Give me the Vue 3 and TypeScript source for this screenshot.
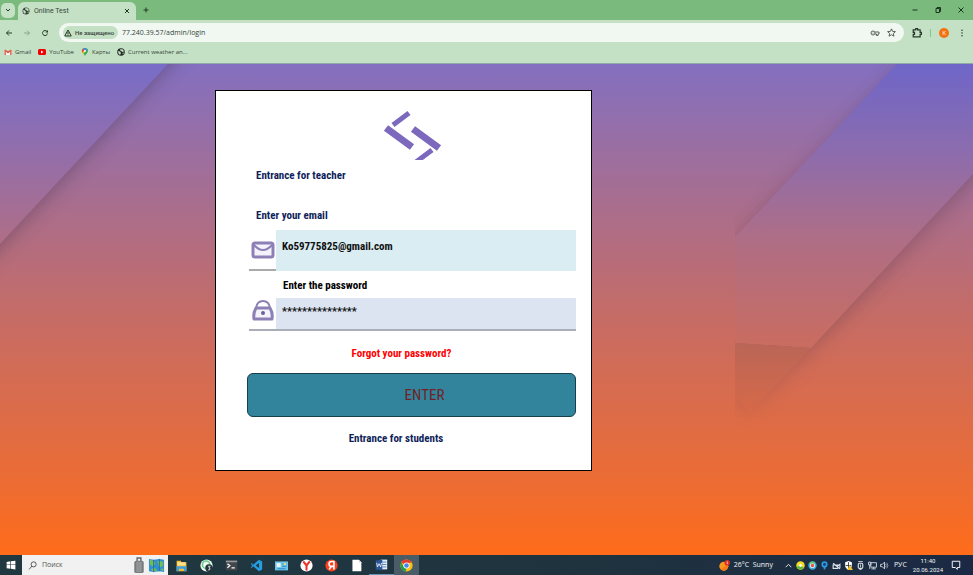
<script setup lang="ts">
import { ref } from 'vue'

const email = ref('Ko59775825@gmail.com')
const password = ref('***************')
const address = ref('77.240.39.57/admin/login')
const query = ref('')
</script>

<template>
  <div class="desktop">
    <header class="browser">
      <div class="tabs">
        <button class="tab-menu" aria-label="Search tabs">
          <svg viewBox="0 0 16 16"><path d="M4 6l4 4 4-4" fill="none" stroke="#233827" stroke-width="2" /></svg>
        </button>
        <div class="tab">
          <svg class="icon" viewBox="0 0 16 16"><circle cx="8" cy="8" r="7" fill="#34423a" /><path d="M2 6l4 1 2 3-2 4-3-3zM7 2l5 1 2 4-4 1-1-2-3-1zM11 10l3-1-2 4z" fill="#c5e1c5" /></svg>
          <span>Online Test</span>
          <button class="plain" aria-label="Close tab">
            <svg viewBox="0 0 16 16"><path d="M4 4l8 8M12 4l-8 8" fill="none" stroke="#233827" stroke-width="2" /></svg>
          </button>
        </div>
        <button class="plain new-tab" aria-label="New tab">
          <svg viewBox="0 0 16 16"><path d="M8 3v10M3 8h10" fill="none" stroke="#233827" stroke-width="2" /></svg>
        </button>
        <div class="window-buttons">
          <button class="plain" aria-label="Minimize"><svg viewBox="0 0 16 16"><path d="M3 8h10" fill="none" stroke="#1c3420" stroke-width="2" /></svg></button>
          <button class="plain" aria-label="Restore"><svg viewBox="0 0 16 16"><path d="M4 5h7v8H4zM6 5V3h7v8h-2" fill="none" stroke="#1c3420" stroke-width="2" /></svg></button>
          <button class="plain" aria-label="Close"><svg viewBox="0 0 16 16"><path d="M3 3l10 10M13 3L3 13" fill="none" stroke="#1c3420" stroke-width="2" /></svg></button>
        </div>
      </div>

      <div class="toolbar">
        <nav class="history">
          <button class="plain" aria-label="Back"><svg viewBox="0 0 16 16"><path d="M14 8H3M8 3L3 8l5 5" fill="none" stroke="#26382a" stroke-width="2" /></svg></button>
          <button class="plain" aria-label="Forward"><svg viewBox="0 0 16 16"><path d="M2 8h11M8 3l5 5-5 5" fill="none" stroke="#8ba58d" stroke-width="2" /></svg></button>
          <button class="plain" aria-label="Reload"><svg viewBox="0 0 16 16"><path d="M13 9a5 5 0 1 1-1-4" fill="none" stroke="#26382a" stroke-width="2" /><path d="M14 2v5H9z" fill="#26382a" /></svg></button>
        </nav>
        <div class="omnibox">
          <button class="security">
            <svg viewBox="0 0 16 16"><path d="M8 2l6.500 12h-13zM8 6v4M8 11v2" fill="none" stroke="#26382a" stroke-width="2" /></svg>
            <span>Не защищено</span>
          </button>
          <input v-model="address" class="address" type="text" aria-label="Address" />
          <svg class="icon wide" viewBox="0 0 20 16"><circle cx="6" cy="8" r="4" fill="none" stroke="#55605a" stroke-width="2" /><circle cx="6" cy="8" r="1" fill="#55605a" /><path d="M10 6h8v4h-2v3h-3v-3h-3" fill="none" stroke="#55605a" stroke-width="2" /></svg>
          <svg class="icon star" viewBox="0 0 16 16"><path d="M8 1.500l2 4.500 5 .5-3.800 3.200 1.200 4.800L8 12l-4.400 2.500 1.200-4.800L1 6.500 6 6z" fill="none" stroke="#3c4840" stroke-width="1.500" /></svg>
        </div>
        <div class="actions">
          <button class="plain" aria-label="Extensions"><svg class="puzzle" viewBox="0 0 16 16"><path d="M2 3h4V1h3v2h4v4h2v3h-2v4H2v-4h2V7H2z" fill="none" stroke="#26382a" stroke-width="2" /></svg></button>
          <span class="divider"></span>
          <button class="avatar">K</button>
          <button class="plain" aria-label="Menu"><svg viewBox="0 0 16 16"><g fill="#26382a"><circle cx="8" cy="2.500" r="1.500" /><circle cx="8" cy="8" r="1.500" /><circle cx="8" cy="13.500" r="1.500" /></g></svg></button>
        </div>
      </div>

      <nav class="bookmarks">
        <a href="#gmail"><svg class="icon" viewBox="0 0 16 16"><path d="M2 4l6 5 6-5" fill="none" stroke="#e5463a" stroke-width="3" /><path d="M1 4h3v10H1zM12 4h3v10h-3z" fill="#e86a60" /><path d="M4 8l4 3 4-3v6H4z" fill="#f4f4f4" /></svg>Gmail</a>
        <a href="#youtube"><svg class="icon" viewBox="0 0 16 16"><rect y="2" width="16" height="12" rx="3" fill="#f00000" /><path d="M6 5l5 3-5 3z" fill="#fff" /></svg>YouTube</a>
        <a href="#maps"><svg class="icon" viewBox="0 0 16 16"><path d="M8 16C7 12 2 10 2 6a6 6 0 0 1 12 0c0 4-5 6-6 10z" fill="#35a853" /><path d="M3 9L8 3 4 1a6 6 0 0 0-1 8z" fill="#e84a3c" /><path d="M4 2a6 6 0 0 1 9 1L9 7z" fill="#4385f0" /><path d="M3 9l4-5 2 3-4 5z" fill="#f8bc10" /><circle cx="8" cy="6" r="2" fill="#fff" /></svg>Карты</a>
        <a href="#weather"><svg class="icon" viewBox="0 0 16 16"><circle cx="8" cy="8" r="7.500" fill="#1f2a24" /><path d="M2 6l4 1 2 3-2 4-3-3zM7 2l5 1 2 4-4 1-1-2-3-1zM11 10l3-1-2 4z" fill="#c5e1c5" /></svg>Current weather an...</a>
      </nav>
    </header>

    <main class="page">
      <svg class="wallpaper" viewBox="0 0 973 491" preserveAspectRatio="none" aria-hidden="true">
        <defs>
          <linearGradient id="sky" gradientUnits="userSpaceOnUse" x1="0" y1="0" x2="0" y2="491">
            <stop offset="0" stop-color="#8470c0" />
            <stop offset="0.500" stop-color="#c46c68" />
            <stop offset="0.850" stop-color="#ec6c34" />
            <stop offset="1" stop-color="#ff6c1a" />
          </linearGradient>
          <linearGradient id="fold" gradientUnits="userSpaceOnUse" x1="0" y1="0" x2="0" y2="290">
            <stop offset="0" stop-color="#6e66c8" />
            <stop offset="0.300" stop-color="#8c6cae" />
            <stop offset="0.600" stop-color="#ae6e86" />
            <stop offset="1" stop-color="#cb6c5e" />
          </linearGradient>
          <linearGradient id="corner" gradientUnits="userSpaceOnUse" x1="0" y1="0" x2="0" y2="180">
            <stop offset="0" stop-color="#786dc8" />
            <stop offset="0.500" stop-color="#936eaa" />
            <stop offset="1" stop-color="#b06e86" />
          </linearGradient>
          <linearGradient id="patch" x1="0" y1="0" x2="0" y2="1">
            <stop offset="0" stop-color="#704c40" stop-opacity="0.200" />
            <stop offset="1" stop-color="#a05038" stop-opacity="0.100" />
          </linearGradient>
          <linearGradient id="fade" gradientUnits="userSpaceOnUse" x1="0" y1="260" x2="0" y2="365">
            <stop offset="0" stop-color="#fff" />
            <stop offset="1" stop-color="#333" />
          </linearGradient>
          <mask id="right" maskUnits="userSpaceOnUse" x="735" y="0" width="238" height="491"><rect x="735" width="238" height="491" fill="url(#fade)" /></mask>
          <filter id="soft" x="-30%" y="-30%" width="160%" height="160%"><feGaussianBlur stdDeviation="10" /></filter>
        </defs>
        <rect width="973" height="491" fill="url(#sky)" />
        <path d="M-40 -40H207L-40 225z" fill="#403048" opacity="0.450" filter="url(#soft)" />
        <path d="M0 0H168L0 180z" fill="url(#corner)" />
        <g mask="url(#right)">
          <path d="M905 0L735 181V345L750 348L1010 75V0z" fill="#503448" opacity="0.400" filter="url(#soft)" />
          <path d="M897 0L735 173V279L811 284L973 110V0z" fill="url(#fold)" />
        </g>
        <path d="M735 279L811 284L750 348L735 334z" fill="url(#sky)" />
        <path d="M735 279L811 284L750 348L735 334z" fill="url(#patch)" />
      </svg>

      <form class="card" @submit.prevent>
        <svg class="logo" viewBox="0 0 60 50" role="img" aria-label="Logo">
          <g fill="none" stroke="#7c68bc">
            <path d="M11 15L27 3" stroke-width="5" />
            <path d="M4 18L30 37M31 19L57 38" stroke-width="7" />
            <path d="M50 40L34 52" stroke-width="5" />
          </g>
        </svg>
        <h1>Entrance for teacher</h1>
        <label class="email-label" for="email">Enter your email</label>
        <div class="field email">
          <span class="symbol"><svg viewBox="0 0 24 20"><rect x="2" y="3" width="20" height="14" rx="2" fill="#f4f2fa" stroke="#8c80b6" stroke-width="3" /><path d="M3 5q9 10 18 0" fill="none" stroke="#8c80b6" stroke-width="2" /></svg></span>
          <input id="email" v-model="email" type="email" />
        </div>
        <label class="password-label" for="password">Enter the password</label>
        <div class="field password">
          <span class="symbol"><svg viewBox="0 0 24 22"><path d="M5 9q1-7 7-7t7 7" fill="none" stroke="#8c80b6" stroke-width="2" /><path d="M5 9h14q3 5 2 11H3Q2 14 5 9z" fill="#f4f2fa" stroke="#8c80b6" stroke-width="3" stroke-linejoin="round" /><circle cx="12" cy="14" r="2" fill="#6e609e" /></svg></span>
          <input id="password" v-model="password" type="text" autocomplete="off" />
        </div>
        <a class="forgot" href="#reset">Forgot your password?</a>
        <button class="enter" type="submit">ENTER</button>
        <a class="students" href="#students">Entrance for students</a>
      </form>
    </main>

    <footer class="taskbar">
      <button class="start" aria-label="Start"><svg viewBox="0 0 16 16"><path d="M1 3l6-1v5H1zM8 2l7-1v6H8zM1 8h6v6l-6-1zM8 8h7v7l-7-1z" fill="#fff" /></svg></button>
      <div class="search">
        <svg class="icon" viewBox="0 0 16 16"><circle cx="10" cy="6" r="4.500" fill="none" stroke="#444" stroke-width="1.500" /><path d="M7 9l-5 6" stroke="#444" stroke-width="1.500" /></svg>
        <input v-model="query" type="search" placeholder="Поиск" aria-label="Поиск" />
        <svg class="suitcase" viewBox="0 0 12 18"><path d="M4 5V1h4v4" fill="none" stroke="#666" stroke-width="1.500" /><rect x="1" y="4" width="10" height="13" rx="2" fill="#777b7c" /><path d="M4 5v11M6 5v11M8 5v11" stroke="#a9adae" /></svg>
        <svg class="map" viewBox="0 0 18 18"><path d="M1 2l5 1 6-1 5 1v13l-5-1-6 1-5-1z" fill="#2f90d2" /><path d="M2 3l4 1 2 3-3 3-3-2zM10 4l6 1v4l-3 2-2-2zM3 13l4-2 3 4-5 0zM13 13l3-1v3z" fill="#74bd55" /><path d="M6 3v13M12 2v13" stroke="#226fa5" /></svg>
      </div>
      <nav class="apps">
        <button aria-label="Explorer"><svg viewBox="0 0 16 16"><path d="M2 2h5l1 2h6v11H2z" fill="#f5bd36" /><path d="M3 4h10v4H3z" fill="#ffe18b" /><path d="M2 9h12v6h-3v-3H5v3H2z" fill="#3d9fe0" /></svg></button>
        <button aria-label="WhatsApp"><svg viewBox="0 0 16 16"><circle cx="8" cy="8" r="7.500" fill="#f0f8f0" /><circle cx="7.500" cy="7" r="4.500" fill="none" stroke="#6acb8c" stroke-width="2" /><circle cx="11" cy="11" r="4.500" fill="#24343c" /><path d="M10 9h2.500l-1.500 2q2 0 1 2-1 1-2 0" fill="none" stroke="#fff" /></svg></button>
        <button aria-label="Terminal"><svg viewBox="0 0 16 16"><rect x="1" y="2" width="14" height="12" fill="#42454a" /><path d="M1 3h14" stroke="#999" stroke-width="2" /><path d="M3 6l3 2-3 3M8 11h4" fill="none" stroke="#fff" stroke-width="1.500" /></svg></button>
        <button aria-label="Code"><svg viewBox="0 0 16 16"><path d="M11 1l4 2v10l-4 2-7-6-2 2-1-1 2-2-2-2 1-1 2 2zM11 5L7 8l4 3z" fill="#269cdf" fill-rule="evenodd" /></svg></button>
        <button aria-label="Control panel"><svg viewBox="0 0 16 16"><rect y="3" width="16" height="11" fill="#6fc5ee" /><rect x="2" y="5" width="5" height="5" fill="#e9f8ff" /><path d="M9 6h5M9 9h5M3 12h10" stroke="#167eb6" /><circle cx="12" cy="6" r="1.500" fill="#ecdf73" /></svg></button>
        <button aria-label="Yandex Browser"><svg viewBox="0 0 16 16"><circle cx="8" cy="8" r="7.500" fill="#fff" /><path d="M4 3l4 5 4-5M8 8v6" fill="none" stroke="#e93329" stroke-width="2.500" /></svg></button>
        <button aria-label="Yandex"><svg viewBox="0 0 16 16"><circle cx="8" cy="8" r="7.500" fill="#fc3f1d" /><path d="M11 13V3H8a3 3 0 0 0 0 6h3M8 9l-3 4" fill="none" stroke="#fff" stroke-width="2" /></svg></button>
        <button aria-label="Document"><svg viewBox="0 0 16 16"><path d="M3 1h8l3 3v11H3z" fill="#fff" /><path d="M11 1v3h3" fill="#ccc" /></svg></button>
        <button class="running" aria-label="Word"><svg viewBox="0 0 16 16"><path d="M7 2h8v12H7z" fill="#e5effb" /><path d="M9 5h5M9 8h5M9 11h5" stroke="#416fae" /><path d="M1 3l8-1v13l-8-1z" fill="#2a579a" /><path d="M2 6l1 5 2-4 2 4 1-5" fill="none" stroke="#fff" /></svg></button>
        <button class="active" aria-label="Chrome"><svg viewBox="0 0 16 16"><circle cx="8" cy="8" r="7.500" fill="#fbc116" /><path d="M8 8L1.500 4.250A7.500 7.500 0 0 1 14.500 4.250L8 5z" fill="#e33b2e" /><path d="M1.500 4.250L5 10l3 1-1 4.500A7.500 7.500 0 0 1 1.500 4.250z" fill="#269d4b" /><circle cx="8" cy="8" r="3.800" fill="#fff" /><circle cx="8" cy="8" r="2.800" fill="#4285f4" /></svg></button>
      </nav>
      <div class="weather">
        <svg viewBox="0 0 16 16"><circle cx="7" cy="9" r="6.500" fill="#f79b20" /><path d="M2 13q6-1 9-9l3 5-4 6q-5 2-8-2z" fill="#fc7a19" /><circle cx="12" cy="4" r="4" fill="#df2d22" /><path d="M12 2v4" stroke="#fff" /></svg>
        <span>26°C&nbsp; Sunny</span>
      </div>
      <div class="tray">
        <svg viewBox="0 0 16 16"><path d="M3 11l5-5 5 5" fill="none" stroke="#fff" stroke-width="1.500" /></svg>
        <svg viewBox="0 0 16 16"><circle cx="8" cy="8" r="7.500" fill="#f2dc25" /><path d="M1 10a7.500 7.500 0 0 0 13 2L8 8z" fill="#58b83b" /><circle cx="8" cy="8" r="2.500" fill="#fff" /></svg>
        <svg viewBox="0 0 16 16"><circle cx="8" cy="8" r="6" fill="#e6f5ff" stroke="#37abdc" stroke-width="3" /><path d="M3 5a6 6 0 0 1 9-1" fill="none" stroke="#68c662" stroke-width="3" /><circle cx="8" cy="8" r="3" fill="#e25535" /></svg>
        <svg viewBox="0 0 16 16"><circle cx="8" cy="6" r="4" fill="#123b70" stroke="#2b9be2" stroke-width="3" /><path d="M8 9v6" stroke="#2b9be2" stroke-width="3" /></svg>
        <svg viewBox="0 0 16 16"><path d="M2 4l12 10M2 7h8v6H2zM10 9l4-3v7" fill="none" stroke="#dce4ea" stroke-width="2" /></svg>
        <svg viewBox="0 0 16 16"><path d="M2 2l6-2 6 2v6q0 5-6 8-6-3-6-8z" fill="#fff" /><path d="M8 2v12M3 8h10" stroke="#24344a" stroke-width="1.500" /><path d="M10 7l6 9H6z" fill="#f4c025" /></svg>
        <svg viewBox="0 0 16 16"><rect x="4" y="4" width="8" height="9" rx="2" fill="none" stroke="#dce4ea" stroke-width="2" /><path d="M4 1h8M6 15h4M8 6v5" stroke="#dce4ea" stroke-width="1.500" /></svg>
        <svg viewBox="0 0 16 16"><path d="M5 3h10v8H5zM10 11v3M6 14h8M1 2h4v5H1zM3 7v7" fill="none" stroke="#dce4ea" stroke-width="1.500" /></svg>
        <svg viewBox="0 0 16 16"><path d="M1 6h3l4-4v12l-4-4H1z" fill="none" stroke="#dce4ea" stroke-width="1.500" /><path d="M10 5q2 3 0 6M12 3q4 5 0 10" fill="none" stroke="#9aa8b4" stroke-width="1.500" /></svg>
      </div>
      <span class="language">РУС</span>
      <time class="clock">11:40<br />20.06.2024</time>
      <button class="notifications" aria-label="Notifications"><svg viewBox="0 0 16 16"><path d="M2 2h12v10h-4v3l-3-3H2z" fill="none" stroke="#fff" stroke-width="1.500" /></svg></button>
    </footer>
  </div>
</template>

<style>
body {
  margin: 0;
}
</style>

<style scoped>
* {
  box-sizing: border-box;
}

.desktop {
  display: flex;
  flex-direction: column;
  min-height: 100vh;
  font-family: "Open Sans", "Noto Sans", sans-serif;
  font-size: 7px;
  line-height: 10px;
  color: #34443a;
}

button,
input {
  margin: 0;
  padding: 0;
  border: 0;
  font: inherit;
  color: inherit;
  background: none;
}

a {
  color: inherit;
  text-decoration: none;
}

svg {
  display: block;
}

.icon {
  flex: none;
  width: 8px;
  height: 8px;
}

.browser {
  flex: none;
  background: #c5e1c5;
  border-bottom: 1px solid #8fa9a4;
}

.tabs {
  display: flex;
  align-items: center;
  height: 20px;
  font-family: Roboto, sans-serif;
  background: #7aba7c;
}

.tab-menu {
  display: grid;
  place-items: center;
  width: 14px;
  height: 15px;
  margin: 0 3px 0 1px;
  border-radius: 5px;
  background: #c5e1c5;
}

.tab-menu svg,
.plain svg {
  width: 8px;
  height: 8px;
}

.plain .puzzle {
  width: 10px;
  height: 10px;
}

.plain {
  display: grid;
  flex: none;
  place-items: center;
  width: 10px;
  height: 10px;
}

.tab {
  display: flex;
  align-items: center;
  align-self: flex-end;
  gap: 4px;
  width: 118px;
  height: 18px;
  padding: 0 4px;
  border-radius: 6px 6px 0 0;
  background: #c5e1c5;
}

.tab span {
  flex: 1;
}

.new-tab {
  margin-left: 5px;
}

.window-buttons {
  display: flex;
  gap: 13px;
  margin-left: auto;
  padding-right: 7px;
}

.toolbar {
  display: flex;
  align-items: center;
  height: 25px;
}

.history {
  display: flex;
  gap: 8px;
  width: 59px;
  padding-left: 4px;
}

.omnibox {
  display: flex;
  flex: 1;
  align-items: center;
  height: 19px;
  padding: 0 8px 0 4px;
  border-radius: 10px;
  background: #f1f8f1;
}

.security {
  display: flex;
  flex: none;
  align-items: center;
  gap: 3px;
  width: 55px;
  height: 13px;
  padding-left: 1px;
  border-radius: 7px;
  font-family: Roboto, sans-serif;
  font-size: 6px;
  font-weight: 500;
  white-space: nowrap;
  background: #c5e1c5;
}

.security svg {
  flex: none;
  width: 8px;
  height: 8px;
}

.address {
  flex: 1;
  min-width: 0;
  padding-left: 4px;
}

.wide {
  width: 10px;
}

.star {
  width: 9px;
  height: 9px;
  margin-left: 7px;
}

.actions {
  display: flex;
  align-items: center;
  gap: 8px;
  padding: 0 6px 0 8px;
}

.divider {
  width: 1px;
  height: 8px;
  background: #83c488;
}

.avatar {
  width: 10px;
  height: 10px;
  border-radius: 50%;
  font-size: 6px;
  text-align: center;
  color: #fff;
  background: #f37210;
}

.bookmarks {
  display: flex;
  gap: 7px;
  height: 18px;
  padding: 0 4px 4px;
  font-size: 6px;
}

.bookmarks a {
  display: flex;
  align-items: center;
  gap: 3px;
}

.page {
  position: relative;
  display: grid;
  flex: 1;
  grid-template-columns: 215fr 377fr 381fr;
  align-items: start;
  padding: 26px 0;
}

.wallpaper {
  position: absolute;
  inset: 0;
  width: 100%;
  height: 100%;
}

.card {
  position: relative;
  display: flex;
  flex-direction: column;
  grid-column: 2;
  padding: 19px 15px 21px 31px;
  border: 1px solid #000;
  font-family: "Roboto Condensed", "Open Sans Condensed", Carlito, Lato, sans-serif;
  font-size: 11px;
  font-weight: 700;
  line-height: 20px;
  color: #0e1e5a;
  background: #fff;
}

.logo {
  align-self: center;
  width: 60px;
  height: 50px;
}

h1 {
  margin: 6px 0 20px;
  padding-left: 9px;
  font-size: inherit;
  line-height: inherit;
}

.email-label {
  padding-left: 9px;
}

.email-label,
.password-label {
  height: 24px;
}

.password-label {
  height: 27px;
  padding: 5px 0 0 36px;
  color: #000;
}

.field {
  display: flex;
  margin-left: 2px;
  color: #111;
}

.field input {
  flex: 1;
  min-width: 0;
  padding-left: 6px;
}

.symbol {
  display: grid;
  place-items: center;
  width: 27px;
}

.symbol svg {
  width: 24px;
  height: 22px;
}

.email {
  height: 41px;
}

.email .symbol {
  border-bottom: 2px solid #aaa;
}

.email input {
  padding-bottom: 8px;
  background: #daedf3;
}

.password {
  height: 33px;
  border-bottom: 2px solid #abaeb8;
}

.password .symbol {
  padding-bottom: 7px;
}

.password input {
  padding-bottom: 4px;
  background: #dbe4f0;
}

.forgot {
  align-self: center;
  margin: 13px 20px 9px 0;
  color: #f00;
}

.enter {
  height: 44px;
  padding-left: 26px;
  border: 1px solid #163f4c;
  border-radius: 6px;
  font-size: 15px;
  font-weight: 400;
  color: #702327;
  background: #31849b;
}

.students {
  align-self: center;
  margin: 12px 31px 0 0;
}

.taskbar {
  display: flex;
  flex: none;
  align-items: center;
  height: 20px;
  color: #f2f5f7;
  background: linear-gradient(90deg, #203840, #1f333f 60%, #1b2944);
}

.start {
  display: grid;
  place-items: center;
  width: 22px;
  height: 20px;
}

.start svg {
  width: 10px;
  height: 10px;
}

.search {
  display: flex;
  align-items: center;
  width: 146px;
  height: 20px;
  padding: 0 3px 0 6px;
  color: #555;
  background: #f1f1f1;
}

.search .icon {
  width: 9px;
  height: 9px;
}

.search input {
  flex: 1;
  min-width: 0;
  padding-left: 5px;
}

.search input::placeholder {
  color: #555;
}

.suitcase {
  width: 12px;
  height: 17px;
}

.map {
  width: 17px;
  height: 17px;
  margin-left: 3px;
}

.apps {
  display: flex;
  padding-left: 1px;
}

.apps button {
  display: grid;
  place-items: center;
  width: 25px;
  height: 20px;
}

.apps svg {
  width: 13px;
  height: 13px;
}

.apps .running {
  border-bottom: 1px solid #6693b0;
}

.apps .active {
  background: #4a5d66;
}

.weather {
  display: flex;
  align-items: center;
  gap: 4px;
  margin-left: auto;
  white-space: nowrap;
}

.weather svg {
  width: 11px;
  height: 11px;
}

.tray {
  display: flex;
  gap: 3px;
  margin: 0 5px 0 11px;
}

.tray svg {
  width: 9px;
  height: 9px;
}

.clock {
  margin: 0 8px 0 6px;
  font-family: Roboto, sans-serif;
  font-size: 6px;
  line-height: 9px;
  text-align: center;
}

.notifications {
  padding-right: 12px;
}

.notifications svg {
  width: 10px;
  height: 10px;
}
</style>
